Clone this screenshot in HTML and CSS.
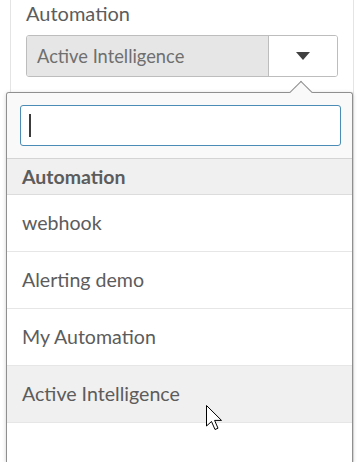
FILE: index.html
```html
<!DOCTYPE html>
<html lang="en">
<head>
    <meta charset="UTF-8">
    <meta name="viewport" content="width=device-width, initial-scale=1.0">
    <title>Automation</title>
    <link rel="stylesheet" href="styles.css">
</head>
<body>
    <div class="panel">
        <div class="label">Automation</div>
        <div class="select">
            <div class="select-value">Active Intelligence</div>
            <div class="select-toggle"><span class="caret-down"></span></div>
        </div>
        <div class="rows">
            <div class="row"></div>
            <div class="row last"></div>
        </div>
    </div>

    <div class="popover">
        <div class="search">
            <div class="search-input"><span class="text-cursor"></span></div>
        </div>
        <div class="group-header">Automation</div>
        <ul class="options">
            <li>webhook</li>
            <li>Alerting demo</li>
            <li>My Automation</li>
            <li class="hover">Active Intelligence</li>
            <li></li>
        </ul>
    </div>

    <svg class="pointer" width="20" height="28" viewBox="0 0 20 28">
        <path d="M1.5 1.5 L1.5 22 L6.5 17.5 L10 25.5 L13 24.2 L9.6 16.4 L16.5 16.4 Z" fill="#fff" stroke="#000" stroke-width="1" stroke-linejoin="miter"/>
    </svg>
</body>
</html>
```

FILE: styles.css
```css
body, html {
    margin: 0;
    padding: 0;
    height: 100%;
    overflow: hidden;
    background-color: #fff;
    font-family: Lato, "Open Sans", sans-serif;
    color: #5c5c5c;
}
.panel {
    box-sizing: border-box;
    margin-left: 10px;
    width: 344px;
    height: 100%;
    padding: 2px 15px 0 15px;
    border-left: 1px solid #e4e4e4;
    border-right: 1px solid #e4e4e4;
    overflow: hidden;
}
.label {
    font-size: 20px;
    line-height: 23px;
}
.select {
    display: flex;
    margin-top: 10px;
    height: 42px;
    box-sizing: border-box;
    border: 1px solid #bdbdbd;
    border-radius: 3px;
    overflow: hidden;
}
.select-value {
    flex: 1;
    display: flex;
    align-items: center;
    padding-left: 10px;
    background-color: #e6e6e6;
    border-right: 1px solid #bdbdbd;
    color: #6f6f6f;
    font-size: 18.3px;
}
.select-toggle {
    width: 68px;
    display: flex;
    align-items: center;
    justify-content: center;
    background-color: #fff;
}
.caret-down {
    width: 0;
    height: 0;
    border-left: 7px solid transparent;
    border-right: 7px solid transparent;
    border-top: 8px solid #404040;
}
.rows {
    margin: 275px -16px 0 -26px;
}
.row {
    height: 95px;
    border-top: 1px solid #e2e2e2;
}
.row.last {
    height: 12px;
}
.popover {
    position: absolute;
    left: 6px;
    top: 92px;
    width: 347px;
    height: 370px;
    box-sizing: border-box;
    border: 1px solid #8f8f8f;
    border-bottom: none;
    border-radius: 3px 3px 0 0;
    background-color: #fff;
    box-shadow: 0 1px 4px rgba(0, 0, 0, 0.18);
}
.popover::before {
    content: "";
    position: absolute;
    left: 286px;
    top: -9px;
    width: 15px;
    height: 15px;
    background-color: #f9f9f9;
    border-left: 1px solid #8f8f8f;
    border-top: 1px solid #8f8f8f;
    transform: rotate(45deg);
}
.search {
    position: relative;
    padding: 12px 11px 12px 13px;
    background-color: #f9f9f9;
    border-radius: 3px 3px 0 0;
}
.search-input {
    height: 41px;
    box-sizing: border-box;
    border: 1px solid #4a8cb5;
    border-radius: 3px;
    background-color: #fff;
    display: flex;
    align-items: center;
    padding-left: 8px;
}
.text-cursor {
    width: 2px;
    height: 23px;
    background-color: #3c3c3c;
}
.group-header {
    height: 35px;
    line-height: 35px;
    padding-left: 15px;
    border-top: 1px solid #d4d4d4;
    border-bottom: 1px solid #dcdcdc;
    background-color: #f0f0f0;
    font-size: 19.5px;
    font-weight: bold;
}
.options {
    list-style: none;
    margin: 0;
    padding: 0;
}
.options li {
    height: 56px;
    line-height: 56px;
    padding-left: 15px;
    border-bottom: 1px solid #e6e6e6;
    font-size: 19.6px;
}
.options li.hover {
    background-color: #f0f0f0;
}
.pointer {
    position: absolute;
    left: 205px;
    top: 404px;
}
```
